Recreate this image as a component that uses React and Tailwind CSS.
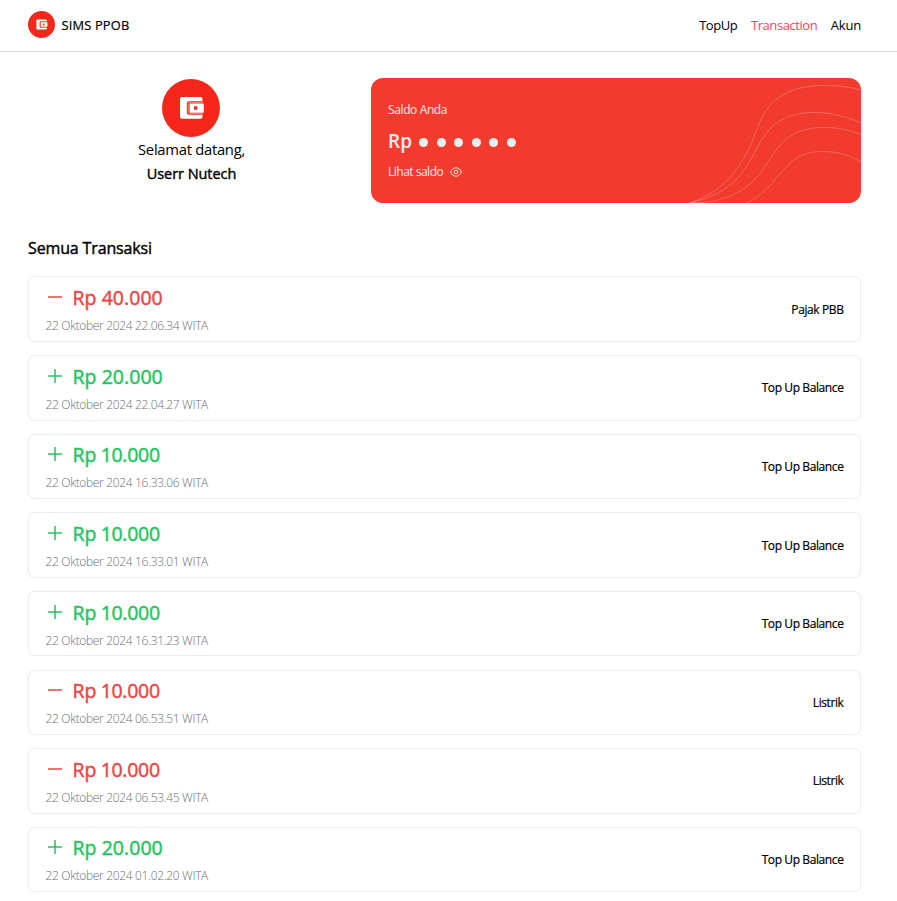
import React from "react";

const transactions = [
  { plus: false, amount: "40.000", date: "22 Oktober 2024 22.06.34 WITA", label: "Pajak PBB" },
  { plus: true, amount: "20.000", date: "22 Oktober 2024 22.04.27 WITA", label: "Top Up Balance" },
  { plus: true, amount: "10.000", date: "22 Oktober 2024 16.33.06 WITA", label: "Top Up Balance" },
  { plus: true, amount: "10.000", date: "22 Oktober 2024 16.33.01 WITA", label: "Top Up Balance" },
  { plus: true, amount: "10.000", date: "22 Oktober 2024 16.31.23 WITA", label: "Top Up Balance" },
  { plus: false, amount: "10.000", date: "22 Oktober 2024 06.53.51 WITA", label: "Listrik" },
  { plus: false, amount: "10.000", date: "22 Oktober 2024 06.53.45 WITA", label: "Listrik" },
  { plus: true, amount: "20.000", date: "22 Oktober 2024 01.02.20 WITA", label: "Top Up Balance" },
];

function Logo({ className }) {
  return (
    <svg viewBox="0 0 58 58" className={className} aria-hidden="true">
      <circle cx="29" cy="29" r="29" fill="#f5271b" />
      <rect x="18" y="18" width="22.5" height="21.7" rx="2" fill="#fff" />
      <path d="M42.5 22.2H27.2a2.4 2.4 0 0 0-2.4 2.4v8.8a2.4 2.4 0 0 0 2.4 2.4h15.3z" fill="#f5271b" />
      <path d="M41 23.4H28a1.8 1.8 0 0 0-1.8 1.8v7.6a1.8 1.8 0 0 0 1.8 1.8h13" fill="none" stroke="#fff" strokeOpacity="0.45" strokeWidth="0.9" />
      <rect x="27.6" y="24.4" width="14.2" height="9.3" rx="0.8" fill="#fff" />
      <circle cx="33.7" cy="29" r="1.9" fill="#f5271b" />
    </svg>
  );
}

function Waves() {
  return (
    <svg
      viewBox="0 0 200 125"
      className="absolute top-0 right-0 h-[125px] w-[200px]"
      fill="none"
      stroke="#fff"
      strokeOpacity="0.25"
      strokeWidth="0.9"
      aria-hidden="true"
    >
      <path d="M29 125C58 115 77 96 90 66C101 40 106 7 166 7.5C178 7.5 189 9 200 12" />
      <path d="M29 125C72 115 84 93 95 72C105 53 117 34 155 34.5C171 34.5 186 39 200 45" />
      <path d="M29 125C72 125 92 107 105 87C118 67 128 49 165 49.3C178 49.5 190 53 200 56.5" />
      <path d="M86 125C107 115 117 96 128 86C139 76 149 73.5 162 73.5C177 73.5 189 77 200 84" />
    </svg>
  );
}

function Eye() {
  return (
    <svg viewBox="0 0 12 12" className="h-3 w-3" fill="none" stroke="#fff" strokeOpacity="0.85" strokeWidth="1" aria-hidden="true">
      <path d="M.6 6C1.6 3.3 3.6 1.8 6 1.8S10.4 3.3 11.4 6C10.4 8.7 8.4 10.2 6 10.2S1.6 8.7.6 6z" />
      <circle cx="6" cy="6" r="1.8" />
    </svg>
  );
}

function SignIcon({ plus }) {
  return (
    <svg viewBox="0 0 20 20" className="h-5 w-5" stroke="currentColor" strokeWidth="1.5" aria-hidden="true">
      <path d="M3 10H17" />
      {plus && <path d="M10 3V17" />}
    </svg>
  );
}

function Amount({ value }) {
  return (
    <span className="ml-[7.5px] pt-0.5 text-[19.5px] leading-7 tracking-[0.04px] [-webkit-text-stroke:0.45px]">
      Rp <span className={value.startsWith("1") ? "-ml-px tracking-[-0.3px]" : ""}>{value}</span>
    </span>
  );
}

function Transaction({ item }) {
  return (
    <li className="flex h-[65.6px] items-center justify-between rounded-[7px] border border-[#eeeeee] px-4 shadow-[0_0_1px_#dddddd]">
      <div className="pt-[0.8px]">
        <div className={item.plus ? "flex h-7 items-center text-[#22c55e]" : "flex h-7 items-center text-[#ef4444]"}>
          <SignIcon plus={item.plus} />
          <Amount value={item.amount} />
        </div>
        <p className="mt-[5px] ml-[0.5px] text-[12px] leading-5 font-light tracking-[-0.33px] text-[#6f6f6f]">{item.date}</p>
      </div>
      <span className="pt-px pr-[0.5px] text-[12px] leading-5 tracking-[-0.4px] [-webkit-text-stroke:0.2px]">{item.label}</span>
    </li>
  );
}

export default function App() {
  return (
    <div className="h-[901px] overflow-hidden bg-white font-['Open_Sans',sans-serif] text-black">
      <header className="flex h-[52px] items-center justify-between border-b border-[#d9d9d9] pr-9 pb-0.5 pl-7">
        <div className="flex items-center gap-[6.5px]">
          <Logo className="h-[27px] w-[27px]" />
          <span className="pt-[3px] text-[12.8px] tracking-[0.2px] [-webkit-text-stroke:0.2px]">SIMS PPOB</span>
        </div>
        <nav className="flex gap-[13.5px] pt-[3px] text-[13px] tracking-[-0.42px]">
          <a>TopUp</a>
          <a className="text-[#f43f5e]">Transaction</a>
          <a className="tracking-[-0.2px]">Akun</a>
        </nav>
      </header>
      <main className="pr-9 pl-7">
        <section className="mt-[26px] flex justify-between">
          <div className="flex w-[327px] flex-col items-center pt-px">
            <Logo className="mr-px h-[58px] w-[58px]" />
            <p className="text-[14.8px] leading-6 tracking-[-0.28px]">Selamat datang,</p>
            <p className="pt-px text-[14.5px] leading-6 tracking-[-0.05px] [-webkit-text-stroke:0.4px]">Userr Nutech</p>
          </div>
          <div className="relative h-[125px] w-[490px] overflow-hidden rounded-xl bg-[#f13b2f] px-[17px] pt-[22px] text-white/90">
            <Waves />
            <p className="text-[12px] leading-5 tracking-[-0.38px]">Saldo Anda</p>
            <div className="mt-[7px] flex h-7 items-center text-[19px] font-semibold">
              <span>Rp</span>
              <div className="mt-0.5 ml-[7px] flex gap-[8.6px]">
                {[0, 1, 2, 3, 4, 5].map((n) => (
                  <span key={n} className="h-[9px] w-[9px] rounded-full bg-[#eeeeee]" />
                ))}
              </div>
            </div>
            <div className="mt-[7px] flex items-center gap-[7px] text-[12px] leading-5 tracking-[-0.5px]">
              <span>Lihat saldo</span>
              <Eye />
            </div>
          </div>
        </section>
        <h2 className="mt-[33px] text-[16px] leading-6 tracking-[-0.14px] [-webkit-text-stroke:0.4px]">Semua Transaksi</h2>
        <ul className="mt-[16.3px] flex flex-col gap-[13.05px]">
          {transactions.map((item) => (
            <Transaction key={item.date} item={item} />
          ))}
        </ul>
      </main>
    </div>
  );
}
